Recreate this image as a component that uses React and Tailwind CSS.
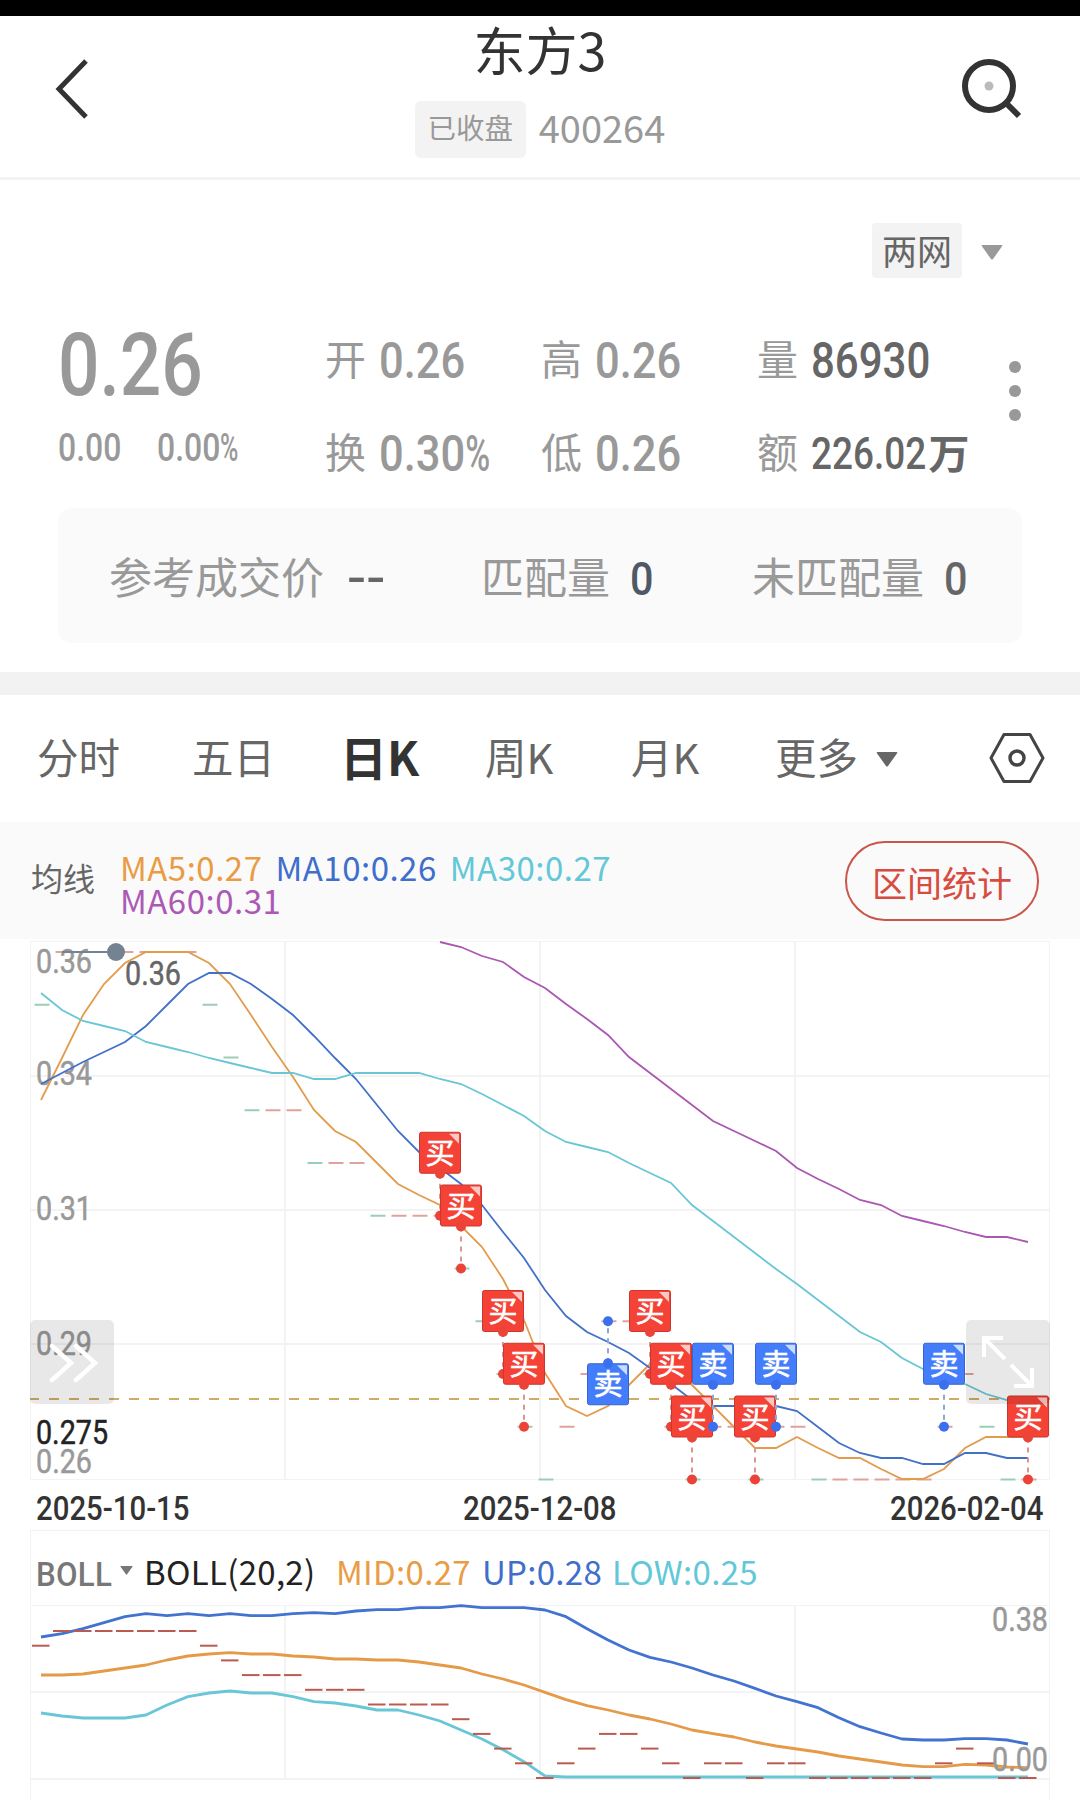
import React from 'react';
import clsx from 'clsx';

// close price level for every day, 0 = 0.36, each step is 0.01 lower
const CLOSES = [
    1, 0, 0, 0, 0, 0, 0, 0, 1, 2, 3, 3, 3, 4, 4, 4, 5, 5, 5, 5, 6, 7, 8, 9,
    10, 9, 8, 7, 7, 8, 9, 10, 9, 9, 10, 9, 9, 10, 10, 10, 10, 10, 10, 9, 8, 9, 10, 10,
];

const MA5 = [
    1100, 1058, 1015, 984, 963, 952, 952, 952, 963, 984, 1015, 1047, 1077, 1110, 1131, 1142,
    1163, 1184, 1195, 1205, 1226, 1247, 1279, 1320, 1373, 1406, 1416, 1406, 1385, 1364, 1364, 1385,
    1406, 1427, 1448, 1448, 1437, 1448, 1458, 1458, 1469, 1479, 1479, 1469, 1448, 1437, 1437, 1437,
];
const MA10 = [
    1084, 1073, 1062, 1052, 1042, 1026, 1005, 984, 973, 973, 984, 999, 1015, 1036, 1058, 1079,
    1105, 1131, 1152, 1168, 1184, 1205, 1232, 1258, 1290, 1316, 1332, 1342, 1353, 1368, 1384, 1400,
    1406, 1406, 1406, 1406, 1411, 1427, 1443, 1453, 1458, 1458, 1464, 1464, 1453, 1453, 1458, 1458,
];
const MA30 = [
    993, 1010, 1021, 1026, 1031, 1042, 1047, 1052, 1058, 1063, 1068, 1073, 1073, 1079, 1079, 1073,
    1073, 1073, 1073, 1079, 1084, 1094, 1105, 1116, 1131, 1142, 1147, 1152, 1163, 1173, 1183, 1205,
    1221, 1237, 1253, 1269, 1284, 1300, 1316, 1332, 1342, 1358, 1369, 1379, 1384, 1394, 1400, 1400,
];
// MA60 starts at day 19
const MA60 = [
    942, 947, 956, 962, 977, 988, 1004, 1019, 1035, 1057, 1073, 1089, 1105, 1121, 1131, 1141, 1151,
    1168, 1179, 1189, 1200, 1205, 1216, 1221, 1226, 1232, 1237, 1237, 1242,
];

const BOLL_UP = [
    171, 161, 146, 128, 110, 101, 107, 101, 107, 101, 107, 107, 101, 98, 101, 93, 89, 89, 83, 83, 77, 83, 83, 83,
    90, 110, 146, 180, 210, 232, 246, 264, 285, 303, 325, 348, 365, 383, 413, 440, 459, 477, 480, 480, 476, 476, 480, 492,
];
const BOLL_MID = [
    285, 285, 282, 273, 264, 255, 240, 228, 222, 218, 222, 222, 228, 231, 237, 237, 240, 240, 246, 255, 264, 282, 297, 315,
    337, 359, 377, 390, 405, 417, 432, 450, 461, 471, 486, 498, 507, 516, 528, 537, 546, 555, 560, 560, 553, 555, 561, 563,
];
const BOLL_LOW = [
    399, 408, 414, 414, 414, 405, 375, 350, 339, 333, 339, 339, 350, 365, 369, 378, 390, 390, 405, 423, 450, 477, 509, 545,
    588, 591, 591, 591, 591, 591, 591, 591, 591, 591, 591, 591, 591, 591, 591, 591, 591, 591, 591, 591, 591, 591, 591, 591,
];

const TRADES = [
    { day: 19, type: 'buy' },
    { day: 20, type: 'buy' },
    { day: 22, type: 'buy' },
    { day: 23, type: 'buy' },
    { day: 27, type: 'sell', below: true },
    { day: 29, type: 'buy' },
    { day: 30, type: 'buy' },
    { day: 31, type: 'buy' },
    { day: 32, type: 'sell' },
    { day: 34, type: 'buy' },
    { day: 35, type: 'sell' },
    { day: 43, type: 'sell' },
    { day: 47, type: 'buy' },
];

const dayX = (i) => 41 + i * 21;
const closeY = (i) => 952 + CLOSES[i] * 52.75;
const bollY = (v) => 1580 + v / 3;
const toPoints = (ys, start = 0) => ys.map((y, i) => `${dayX(i + start)},${y}`).join(' ');

const Num = ({ children, className }) => (
    <span className={clsx('inline-block origin-left whitespace-nowrap font-[Roboto,sans-serif] font-medium', className)}>
        {children}
    </span>
);

const Percent = () => <span className="inline-block origin-left scale-x-[0.78]">%</span>;

const Caret = ({ className }) => (
    <svg viewBox="0 0 22 15" className={className}>
        <path d="M1.5 0h19q1.500 0 .6 1.200L12 14q-1 1.200-2 0L.9 1.200Q0 0 1.500 0z" fill="currentColor" />
    </svg>
);

const AxisText = ({ x, y, w = 56, fill = '#999', children }) => (
    <text
        x={x}
        y={y}
        textLength={w}
        lengthAdjust="spacingAndGlyphs"
        fill={fill}
        stroke={fill}
        strokeWidth="0.500"
        className="font-[Roboto,sans-serif] text-[33px]"
    >
        {children}
    </text>
);

const TradeMark = ({ day, type, below }) => {
    const x = dayX(day);
    const y = closeY(day);
    const top = below ? y + 42 : y - 84;
    const anchor = below ? top : top + 42;
    const buy = type === 'buy';
    const dot = buy ? '#ec4338' : '#3a6fee';
    return (
        <g>
            <line x1={x} x2={x} y1={anchor} y2={y} stroke={buy ? '#dd9590' : '#8fa6d2'} strokeWidth="2" strokeDasharray="5 5" />
            <circle cx={x} cy={y} r="5" fill={dot} />
            <rect x={x - 20.5} y={top + 0.5} width="41" height="41" rx="2" fill={buy ? '#f54236' : '#447dfb'} stroke={buy ? '#c9372e' : '#3765c9'} />
            <path d={`M${x + 9} ${top + 2}h10v10z`} fill={buy ? '#fcc8c4' : '#cbdbfe'} />
            <text x={x} y={top + 32} textAnchor="middle" fill="#fff" stroke="#fff" strokeWidth="0.600" className="font-['Noto_Sans_CJK_SC',sans-serif] text-[29px]">
                {buy ? '买' : '卖'}
            </text>
            <circle cx={x} cy={anchor} r="5" fill={dot} />
        </g>
    );
};

const Header = () => (
    <header className="flex h-[164px] justify-between border-b-3 border-[#f3f3f3] px-[54px] pt-1">
        <div className="w-16">
            <svg viewBox="0 0 36 62" className="mt-[38px] h-[62px] w-9">
                <path d="M32 3 5 31l27 28" fill="none" stroke="#333" strokeWidth="5" />
            </svg>
        </div>
        <div className="flex flex-col items-center">
            <h1 className="mt-px text-[52px] leading-[56px] text-[#333]">东方3</h1>
            <div className="mt-[24px] flex h-[57px] items-center gap-[13px] text-[#999]">
                <span className="flex h-full w-[111px] items-center justify-center rounded-md bg-[#f3f3f3] pb-1 text-[28.500px] leading-none">已收盘</span>
                <span className="-mt-[5px] text-[38px] leading-none">400264</span>
            </div>
        </div>
        <svg viewBox="0 0 64 64" className="mt-9 h-16 w-16">
            <circle cx="27" cy="30" r="24" fill="none" stroke="#333" strokeWidth="6" />
            <path d="M43 46l14 14" stroke="#333" strokeWidth="6" />
            <circle cx="27" cy="30" r="4.500" fill="#bbb" />
        </svg>
    </header>
);

const Quote = ({ label, children, dark, scale = 'scale-x-[0.87]', size = 'text-[50px]', suffix }) => (
    <div className="flex h-[60px] w-[216px] items-center">
        <span className="-mt-[2px] w-[54px] text-[41px] leading-none">{label}</span>
        <span className={clsx('flex w-[162px] items-center', dark && 'text-[#666]')}>
            <Num className={clsx('mt-[6px]', size, scale)}>{children}</Num>
            {suffix && <span className="-ml-[23px] text-[41px] leading-none font-bold">{suffix}</span>}
        </span>
    </div>
);

const Summary = () => (
    <section className="h-[492px] text-[#999]">
        <div className="flex items-center justify-end pt-[43px] pr-[77px]">
            <span className="flex h-[55px] w-[90px] items-center justify-center rounded bg-[#f3f3f3] pb-[3px] text-[35px] leading-none text-[#666]">两网</span>
            <Caret className="mt-1 ml-[19px] h-[15px] w-[22px]" />
        </div>
        <div className="mt-[50px] flex h-[158px] pl-[58px]">
            <div className="w-[267px] pt-0.5">
                <Num className="scale-x-[0.83] text-[88px] leading-[70px]">0.26</Num>
                <div className="mt-[25px] flex leading-[46px]">
                    <Num className="w-[99px] scale-x-[0.84] text-[38px]">0.00</Num>
                    <Num className="scale-x-[0.84] text-[38px]">0.00<Percent /></Num>
                </div>
            </div>
            <div className="grid w-[648px] grid-cols-3 content-start gap-y-[33px]">
                <Quote label="开">0.26</Quote>
                <Quote label="高">0.26</Quote>
                <Quote label="量" dark scale="scale-x-[0.84]">86930</Quote>
                <Quote label="换">0.30<Percent /></Quote>
                <Quote label="低">0.26</Quote>
                <Quote label="额" dark scale="scale-x-[0.82]" size="text-[45px]" suffix="万">226.02</Quote>
            </div>
            <div className="mt-[33px] ml-9 flex flex-col gap-3">
                <i className="size-3 rounded-full bg-[#999]" />
                <i className="size-3 rounded-full bg-[#999]" />
                <i className="size-3 rounded-full bg-[#999]" />
            </div>
        </div>
        <div className="mx-[58px] mt-[22px] flex h-[135px] items-center rounded-[14px] bg-[#fafafa] pl-[51px] text-[43px] leading-none">
            <span className="w-[238px]">参考成交价</span>
            <Num className="mt-1 w-[134px] scale-x-[1.2] text-[47px] text-[#666]">--</Num>
            <span className="w-[149px]">匹配量</span>
            <Num className="mt-[6px] w-[122px] scale-x-[0.88] text-[47px] text-[#4f5864]">0</Num>
            <span className="w-[192px]">未匹配量</span>
            <Num className="mt-[6px] scale-x-[0.88] text-[47px] text-[#666]">0</Num>
        </div>
    </section>
);

const Tabs = () => (
    <nav className="flex h-[127px] items-center pl-[37px] text-[41.500px] leading-none text-[#666]">
        <div className="flex items-center pb-1">
            <span className="w-[155px]">分时</span>
            <span className="w-[148px]">五日</span>
            <span className="w-[145px] pb-[3px] text-[47px] font-bold text-[#333]">日K</span>
            <span className="w-[146px]">周K</span>
            <span className="w-[144px]">月K</span>
            <span className="w-[101px]">更多</span>
        </div>
        <Caret className="mt-0.5 h-[15px] w-[22px]" />
        <svg viewBox="0 0 56 52" className="-mt-0.5 ml-[91px] h-[52px] w-14">
            <path d="M15 2.500h26L54 26 41 49.500H15L2 26z" fill="none" stroke="#444" strokeWidth="3" strokeLinejoin="round" />
            <circle cx="28" cy="26" r="7" fill="none" stroke="#444" strokeWidth="3.400" />
        </svg>
    </nav>
);

const MaBar = () => (
    <div className="flex h-[117px] bg-[#fafafa] pl-[31px]">
        <span className="mt-[38px] w-[89px] text-[32px] leading-[34px] text-[#666]">均线</span>
        <div className="mt-[29px] w-[725px] text-[33px] leading-[33px] tracking-[0.5px]">
            <div className="flex gap-[13px]">
                <span className="text-[#ea9c45]">MA5:0.27</span>
                <span className="text-[#3f6ecb]">MA10:0.26</span>
                <span className="text-[#62c8d8]">MA30:0.27</span>
            </div>
            <div className="text-[#ab59b5]">MA60:0.31</div>
        </div>
        <button className="mt-[19px] h-20 w-[194px] rounded-full border-2 border-[#c9554b] text-[35px] leading-none text-[#d84c40]">区间统计</button>
    </div>
);

const KLineChart = () => (
    <svg viewBox="0 939 1080 543" className="block h-[543px] w-full overflow-visible">
        <g stroke="#f3f3f3" strokeWidth="2" fill="none">
            <rect x="30.500" y="941.500" width="1019" height="538" strokeWidth="1" />
            <path d="M285 941v539M540 941v539M795 941v539M30 1076h1020M30 1210h1020M30 1344h1020" />
        </g>
        <AxisText x="36" y="973">0.36</AxisText>
        <AxisText x="36" y="1085">0.34</AxisText>
        <AxisText x="36" y="1220">0.31</AxisText>
        <AxisText x="36" y="1355">0.29</AxisText>
        <AxisText x="36" y="1444" w="72" fill="#222">0.275</AxisText>
        <AxisText x="36" y="1473">0.26</AxisText>
        <line x1="30" x2="1050" y1="1399" y2="1399" stroke="#d2aa66" strokeWidth="2" strokeDasharray="10 10" strokeDashoffset="1" />
        {CLOSES.map((c, i) => (
            <line
                key={i}
                x1={dayX(i) - 6.500}
                x2={dayX(i) + 8.500}
                y1={closeY(i)}
                y2={closeY(i)}
                stroke={i === 0 || c > CLOSES[i - 1] ? '#9bceb5' : '#dfa29d'}
                strokeWidth="2"
            />
        ))}
        <g fill="none" strokeWidth="1.800">
            <polyline points={toPoints(MA5)} stroke="#e39b4c" />
            <polyline points={toPoints(MA10)} stroke="#4270c9" />
            <polyline points={toPoints(MA30)} stroke="#68c6d6" />
            <polyline points={toPoints(MA60, 19)} stroke="#a958b2" />
        </g>
        <line x1="62" x2="116" y1="952" y2="952" stroke="#748291" strokeWidth="2" />
        <circle cx="116" cy="952" r="9" fill="#748291" />
        <AxisText x="125" y="985" fill="#666">0.36</AxisText>
        {TRADES.map((t) => <TradeMark key={t.day} {...t} />)}
        <rect x="30" y="1320" width="84" height="84" rx="5" fill="#000" fillOpacity="0.09" />
        <path d="M52 1346l19 17-19 17M76 1346l19 17-19 17" fill="none" stroke="#fff" strokeWidth="4.500" strokeLinecap="round" />
        <rect x="966" y="1320" width="84" height="84" rx="5" fill="#000" fillOpacity="0.09" />
        <path d="M984 1357v-19h19M985 1339l20 20M1032 1368v18h-18M1031 1385l-20-20" fill="none" stroke="#fff" strokeWidth="4" />
    </svg>
);

const BollChart = () => (
    <svg viewBox="0 1600 1080 200" className="block h-[200px] w-full">
        <g stroke="#f3f3f3" strokeWidth="2" fill="none">
            <path d="M30.500 1600v200M1049.500 1600v200M30 1605.500h1020" strokeWidth="1" />
            <path d="M285 1605v174M540 1605v174M795 1605v174M30 1692h1020M30 1779h1020" />
        </g>
        <g fill="none" strokeWidth="2.800" strokeLinejoin="round">
            <polyline points={toPoints(BOLL_UP.map(bollY))} stroke="#4373d0" />
            <polyline points={toPoints(BOLL_MID.map(bollY))} stroke="#e59a48" />
            <polyline points={toPoints(BOLL_LOW.map(bollY))} stroke="#68c6d6" />
        </g>
        {CLOSES.map((c, i) => (
            <line
                key={i}
                x1={dayX(i) - 9}
                x2={dayX(i) + 8.500}
                y1={1631 + c * 14.700}
                y2={1631 + c * 14.700}
                stroke="#bb5a50"
                strokeWidth="2"
            />
        ))}
        <AxisText x="992" y="1631">0.38</AxisText>
        <AxisText x="992" y="1771">0.00</AxisText>
    </svg>
);

const App = () => (
    <div className="h-[1800px] w-[1080px] overflow-hidden bg-white font-['Noto_Sans_CJK_SC',sans-serif]">
        <div className="h-4 bg-black" />
        <Header />
        <Summary />
        <div className="h-[23px] bg-[#f2f2f2]" />
        <Tabs />
        <MaBar />
        <KLineChart />
        <div className="flex h-[48px] items-center pt-1 pl-[36px] leading-none text-[#333]">
            <Num className="w-[427px] scale-x-[0.89] text-[33px]">2025-10-15</Num>
            <Num className="w-[427px] scale-x-[0.89] text-[33px]">2025-12-08</Num>
            <Num className="scale-x-[0.89] text-[33px]">2026-02-04</Num>
        </div>
        <div className="mx-[30px] flex h-[70px] border border-b-0 border-[#f3f3f3] pt-5 pl-[5px] text-[33px] leading-[40px] tracking-[0.3px]">
            <Num className="mt-[3px] w-[84px] scale-x-[0.92] text-[34px] text-[#777]">BOLL</Num>
            <Caret className="mt-[15px] h-[9px] w-[13px] text-[#777]" />
            <span className="ml-[11px] w-[192px] text-[#222]">BOLL(20,2)</span>
            <span className="w-[146px] text-[#ea9c45]">MID:0.27</span>
            <span className="w-[130px] text-[#3f6ecb]">UP:0.28</span>
            <span className="text-[#62c8d8]">LOW:0.25</span>
        </div>
        <BollChart />
    </div>
);

export default App;
